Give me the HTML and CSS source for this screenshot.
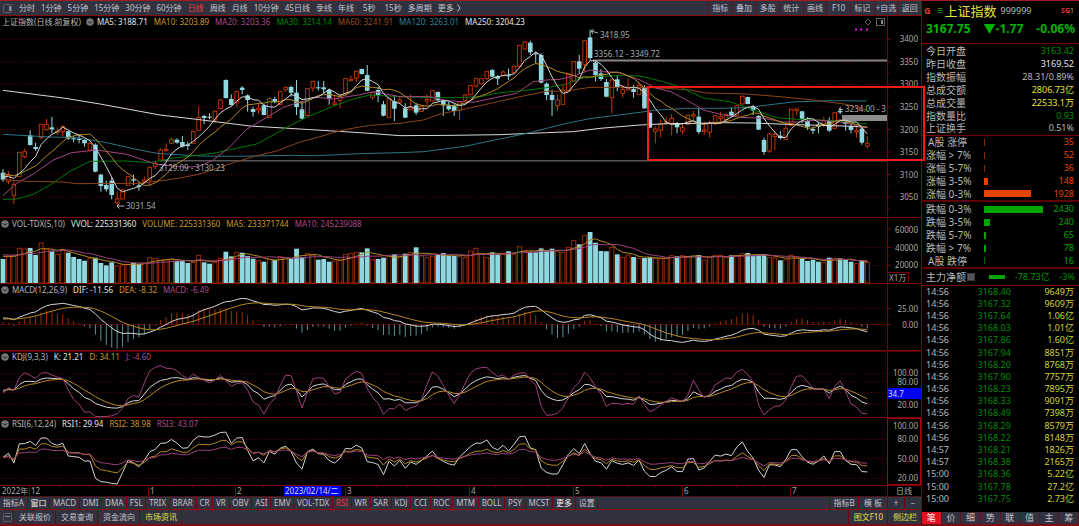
FILE: index.html
```html
<!DOCTYPE html>
<html lang="zh-CN">
<head>
<meta charset="utf-8">
<title>上证指数 999999</title>
<link rel="stylesheet" href="styles.css">
</head>
<body>
<div class="app">
  <main class="main">
    <nav class="bar bar-top">
      <div class="periods">
        <button class="icon-btn" aria-label="侧栏"><svg viewBox="0 0 9 9"><rect x=".5" y=".5" width="8" height="8" rx="1" fill="none" stroke="#5c5c66"/><path d="M6 2v5h2V2z" fill="#8a8a94"/></svg></button>
        <button>分时</button><button>1分钟</button><button>5分钟</button><button>15分钟</button><button>30分钟</button><button>60分钟</button><button class="active">日线</button><button>周线</button><button>月线</button><button>10分钟</button><button>45日线</button><button>季线</button><button>年线</button><button class="wide">5秒</button><button>15秒</button><button>多周期</button><button class="more">更多<svg class="chev" viewBox="0 0 4 8"><path d="M.5.5 3 4 .5 7.500" fill="none" stroke="#c4c4cc"/></svg></button>
      </div>
      <div class="tools">
        <button>指标</button><button>叠加</button><button>多股</button><button>统计</button><button>画线</button><button>F10</button><button>标记</button><button>+自选</button><button>返回</button>
      </div>
    </nav>

    <section class="panel">
      <svg id="price" class="plot" viewBox="0 16 921 202"></svg>
      <div class="legend"><span>上证指数(日线.前复权)</span><svg class="fold" viewBox="0 0 9 9"><circle cx="4.500" cy="4.500" r="4.200" fill="#77777b"/><path d="M2.300 3.700 4.500 6 6.700 3.700" fill="none" stroke="#111"/></svg><span class="white">MA5: 3188.71</span><span class="gold">MA10: 3203.89</span><span class="pink">MA20: 3203.36</span><span class="green">MA30: 3214.14</span><span class="brown">MA60: 3241.91</span><span class="teal">MA120: 3263.01</span><span class="white">MA250: 3204.23</span></div>
    </section>
    <section class="panel">
      <svg id="volume" class="plot" viewBox="0 218 921 66"></svg>
      <div class="legend"><svg class="fold" viewBox="0 0 9 9"><circle cx="4.500" cy="4.500" r="4.200" fill="#77777b"/><path d="M2.300 3.700 4.500 6 6.700 3.700" fill="none" stroke="#111"/></svg><span>VOL-TDX(5,10)</span><span class="white">VVOL: 225331360</span><span class="gold">VOLUME: 225331360</span><span class="gold">MA5: 233371744</span><span class="pink">MA10: 245239088</span></div>
    </section>
    <section class="panel">
      <svg id="macd" class="plot" viewBox="0 284 921 67"></svg>
      <div class="legend"><svg class="fold" viewBox="0 0 9 9"><circle cx="4.500" cy="4.500" r="4.200" fill="#77777b"/><path d="M2.300 3.700 4.500 6 6.700 3.700" fill="none" stroke="#111"/></svg><span>MACD(12,26,9)</span><span class="white">DIF: -11.56</span><span class="gold">DEA: -8.32</span><span class="pink">MACD: -6.49</span></div>
    </section>
    <section class="panel">
      <svg id="kdj" class="plot" viewBox="0 351 921 67"></svg>
      <div class="legend"><svg class="fold" viewBox="0 0 9 9"><circle cx="4.500" cy="4.500" r="4.200" fill="#77777b"/><path d="M2.300 3.700 4.500 6 6.700 3.700" fill="none" stroke="#111"/></svg><span>KDJ(9,3,3)</span><span class="white">K: 21.21</span><span class="gold">D: 34.11</span><span class="pink">J: -4.60</span></div>
    </section>
    <section class="panel">
      <svg id="rsi" class="plot" viewBox="0 418 921 68"></svg>
      <div class="legend"><svg class="fold" viewBox="0 0 9 9"><circle cx="4.500" cy="4.500" r="4.200" fill="#77777b"/><path d="M2.300 3.700 4.500 6 6.700 3.700" fill="none" stroke="#111"/></svg><span>RSI(6,12,24)</span><span class="white">RSI1: 29.94</span><span class="gold">RSI2: 38.98</span><span class="pink">RSI3: 43.07</span></div>
    </section>
    <svg id="dates" class="plot" viewBox="0 486 921 10"></svg>

    <nav class="bar bar-tabs">
      <div class="cells tabs">
        <button>指标A</button><button class="lit">窗口</button><button>MACD</button><button>DMI</button><button>DMA</button><button>FSL</button><button>TRIX</button><button>BRAR</button><button>CR</button><button>VR</button><button>OBV</button><button>ASI</button><button>EMV</button><button>VOL-TDX</button><button class="active">RSI</button><button>WR</button><button>SAR</button><button>KDJ</button><button>CCI</button><button>ROC</button><button>MTM</button><button>BOLL</button><button>PSY</button><button>MCST</button><button class="lit">更多</button><button>设置</button>
      </div>
      <div class="cells cells-right">
        <button class="mode">指标B</button><button class="mode">模 板</button><button class="sign">+</button><button class="sign">−</button>
      </div>
    </nav>
    <footer class="bar bar-status">
      <div class="cells">
        <button class="icon-btn" aria-label="面板"><svg viewBox="0 0 9 9"><rect x=".5" y=".5" width="8" height="8" rx="1" fill="none" stroke="#5c5c66"/><path d="M2 3.500h5" stroke="#8a8a92"/></svg></button>
        <button>关联报价</button><button>交易查询</button><button>资金流向</button><button class="yellow">市场资讯</button>
      </div>
      <div class="cells cells-right"><button class="yellow">图文F10</button><button class="yellow">侧边栏</button></div>
    </footer>
    <div class="mark-box"></div>
  </main>

  <aside class="side">
    <header class="quote">
      <div class="quote-name"><b class="red">G</b><span class="menu">☰</span><h1>上证指数</h1><span class="code">999999</span><span class="sg"><b class="red">SG</b>1</span></div>
      <div class="quote-price"><span>3167.75</span><span>▼-1.77</span><span>-0.06%</span></div>
    </header>
    <table class="facts">
      <tr><th>今日开盘</th><td class="down">3163.42</td></tr>
      <tr><th>昨日收盘</th><td class="bright">3169.52</td></tr>
      <tr><th>指数振幅</th><td>28.31/0.89%</td></tr>
      <tr><th>总成交额</th><td class="sum">2806.73亿</td></tr>
      <tr><th>总成交量</th><td class="sum">22533.1万</td></tr>
      <tr><th>指数量比</th><td class="down">0.93</td></tr>
      <tr><th>上证换手</th><td>0.51%</td></tr>
    </table>
    <table class="facts spread up">
      <tr><th class="in">A股 涨停</th><td><i class="thin" style="width:1px"></i></td><td>35</td></tr>
      <tr><th>涨幅 &gt; 7%</th><td><i class="thin" style="width:1px"></i></td><td>52</td></tr>
      <tr><th>涨幅 5-7%</th><td><i class="thin" style="width:1px"></i></td><td>36</td></tr>
      <tr><th>涨幅 3-5%</th><td><i style="width:4px"></i></td><td>148</td></tr>
      <tr><th>涨幅 0-3%</th><td><i style="width:47px"></i></td><td>1928</td></tr>
    </table>
    <table class="facts spread fall">
      <tr><th>跌幅 0-3%</th><td><i style="width:59px"></i></td><td>2430</td></tr>
      <tr><th>跌幅 3-5%</th><td><i style="width:6px"></i></td><td>240</td></tr>
      <tr><th>跌幅 5-7%</th><td><i style="width:2px"></i></td><td>65</td></tr>
      <tr><th>跌幅 &gt; 7%</th><td><i style="width:2px"></i></td><td>78</td></tr>
      <tr><th class="in">A股 跌停</th><td><i class="thin" style="width:1px"></i></td><td>16</td></tr>
    </table>
    <div class="flow"><span>主力净额</span><svg class="flow-icon" viewBox="0 0 8 8"><rect width="8" height="8" fill="#3a3a3e"/><path d="M1 2h6M1 4h6M1 6h6" stroke="#8a8a8e" stroke-width=".7"/></svg><i style="width:16px"></i><span class="amount">-78.73亿</span><span class="pct">-3%</span></div>
    <div class="deals">
      <table>
        <tr><td>14:56</td><td>3168.40</td><td>9649万</td></tr>
        <tr><td>14:56</td><td>3167.32</td><td>9609万</td></tr>
        <tr><td>14:56</td><td>3167.64</td><td>1.06亿</td></tr>
        <tr><td>14:56</td><td>3168.03</td><td>1.01亿</td></tr>
        <tr><td>14:56</td><td>3167.86</td><td>1.60亿</td></tr>
        <tr><td>14:56</td><td>3167.94</td><td>8851万</td></tr>
        <tr><td>14:56</td><td>3168.20</td><td>8768万</td></tr>
        <tr><td>14:56</td><td>3167.90</td><td>7757万</td></tr>
        <tr><td>14:56</td><td>3168.23</td><td>7895万</td></tr>
        <tr><td>14:56</td><td>3168.33</td><td>9091万</td></tr>
        <tr><td>14:56</td><td>3168.49</td><td>7398万</td></tr>
        <tr><td>14:56</td><td>3168.29</td><td>8579万</td></tr>
        <tr><td>14:56</td><td>3168.22</td><td>8148万</td></tr>
        <tr><td>14:57</td><td>3168.21</td><td>1826万</td></tr>
        <tr><td>14:57</td><td>3168.38</td><td>2165万</td></tr>
        <tr><td>15:00</td><td>3168.36</td><td>5.22亿</td></tr>
        <tr><td>15:00</td><td>3167.78</td><td>27.2亿</td></tr>
        <tr><td>15:00</td><td>3167.75</td><td>2.73亿</td></tr>
      </table>
    </div>
    <nav class="side-tabs"><button class="on">笔</button><button>价</button><button>细</button><button>势</button><button>联</button><button>值</button><button>主</button><button>筹</button></nav>
  </aside>
</div>
<script src="charts.js"></script>
</body>
</html>
```
FILE: styles.css
```css
:root {
  --line: #780008;
  --bar: #31313f;
  --text: #b8b8b8;
  --gold: #c8982a;
  --pink: #ad4a88;
  --green: #008400;
  --brown: #96501e;
  --teal: #2f8494;
  --yellow: #e2e23c;
}
* { box-sizing: border-box; }
body {
  margin: 0;
  background: #000;
  color: var(--text);
  font: 8px/10px "Noto Sans", "Noto Sans CJK SC", sans-serif;
}
button {
  padding: 0;
  border: 0;
  background: none;
  color: #c4c4cc;
  font: inherit;
  white-space: nowrap;
}
button.active { color: #f03c3c; }
button.lit { color: #f0f0f0; }
button.yellow { color: var(--yellow); }
.app {
  display: grid;
  grid-template-columns: minmax(0, 1fr) 157px;
  min-height: 100vh;
  border-top: 1px solid #9c1c24;
}
.main {
  position: relative;
  display: flex;
  flex-direction: column;
  border-right: 1px solid var(--line);
}
.bar {
  display: flex;
  justify-content: space-between;
  background: var(--bar);
  border-bottom: 1px solid #860a12;
}
.bar-top { height: 15px; }
.periods {
  display: flex;
  align-items: center;
  gap: 6px;
  padding-left: 3px;
}
.icon-btn svg { display: block; width: 9px; height: 9px; }
.periods .icon-btn { margin-right: 1px; }
.periods .wide { padding: 0 3px; }
.more { display: flex; align-items: center; gap: 3px; }
.chev { width: 4px; height: 8px; }
.tools {
  display: grid;
  grid-template-columns: repeat(9, 1fr);
  width: 213px;
}
.tools button { border-left: 1px solid #5c1420; }

.panel { display: grid; }
.plot { display: block; width: 100%; height: auto; }
.panel > * { grid-area: 1 / 1; }
.legend {
  display: flex;
  align-items: center;
  align-self: start;
  gap: 6px;
  height: 12px;
  padding-left: 2px;
  white-space: nowrap;
}
.legend .fold { margin: 0 -3px 0 -1px; }
.legend .fold:first-child { margin-left: 0; }
.panel:not(:first-of-type) .legend { padding-left: 1px; }
.fold { width: 8px; height: 8px; }
.white { color: #e4e4e4; }
.gold { color: var(--gold); }
.pink { color: var(--pink); }
.green { color: var(--green); }
.brown { color: var(--brown); }
.teal { color: var(--teal); }
.plot text { font-size: 8px; fill: #a8a8a8; }

.cells { display: flex; }
.cells button { padding: 0 2px; border-right: 1px solid var(--line); }
.cells-right button { border-right: 0; border-left: 1px solid var(--line); }
.tabs { width: 65%; }
.tabs button { flex: 1 0 auto; }
.bar-tabs { height: 14px; border-top: 1px solid #4c1018; }
.bar-tabs .sign { width: 17px; }
.bar-tabs .mode { width: 29px; }
.bar-status { height: 16px; border-bottom: 2px solid #7c0c14; }
.bar-status .cells button { padding: 0 4px 0 5px; }
.bar-status .cells .icon-btn { padding: 0 1px 0 3px; }
.mark-box {
  position: absolute;
  top: 85px;
  right: -4px;
  width: 278px;
  height: 75px;
  border: 2px solid #ee1c14;
}

.side {
  display: flex;
  flex-direction: column;
  font-size: 9px;
}
.quote { height: 43px; border-bottom: 1px solid var(--line); }
.quote-name {
  display: flex;
  align-items: center;
  height: 19px;
  padding: 0 5px 0 2px;
}
.red { color: #e43838; }
.menu { margin: 0 2px 0 6px; color: #2c9c2c; font-size: 7px; }
h1 {
  margin: 0;
  color: var(--yellow);
  font-size: 13px;
  font-weight: 400;
  line-height: 18px;
}
.code { margin-left: 4px; }
.sg { margin-left: auto; font-size: 7px; }
.quote-price {
  display: flex;
  justify-content: space-between;
  padding: 1px 4px 0 4px;
  color: #00b400;
  font-size: 12px;
  font-weight: 700;
  line-height: 16px;
}
table { width: 100%; border-collapse: collapse; }
td, th { padding: 0; font-weight: 400; }
.facts { border-bottom: 1px solid var(--line); }
.facts tr { height: 13px; }
.facts th {
  padding-left: 4px;
  font-size: 10px;
  text-align: left;
  white-space: nowrap;
}
.facts th.in { padding-left: 6px; }
.facts td { padding-right: 5px; text-align: right; }
.down { color: #009000; }
.bright { color: #e4e4e4; }
.sum { color: var(--yellow); }
.spread th { width: 62px; }
.spread td:nth-child(2) { padding: 0; }
.spread i { display: block; height: 7px; background: currentColor; }
.spread .thin { opacity: .6; }
.up { border-bottom: 2px solid #5c0006; color: #e44400; }
.fall { margin-top: 1px; border-bottom: 2px solid #5c0006; color: #00a400; }
.up th, .fall th { color: var(--text); }
.flow {
  display: flex;
  align-items: center;
  height: 17px;
  padding: 0 4px;
  border-bottom: 1px solid var(--line);
  font-size: 10px;
}
.flow-icon { width: 8px; height: 8px; margin-left: 1px; }
.flow i { height: 4px; margin-left: 14px; background: #00a400; }
.amount, .pct { margin-left: auto; color: #009000; font-size: 9px; }
.deals { flex: 1; padding-bottom: 7px; }
.deals table { height: 100%; }
.deals td:nth-child(1) { padding-left: 4px; }
.deals td:nth-child(2) { color: #008c00; text-align: center; }
.deals td:nth-child(3) { padding-right: 5px; color: #d2d23c; text-align: right; }
.side-tabs {
  display: grid;
  grid-template-columns: repeat(8, 1fr);
  height: 14px;
  border-bottom: 2px solid #7c0c14;
  background: var(--bar);
}
.side-tabs button { border-right: 1px solid #5c1420; }
.side-tabs .on { background: #e01420; color: #fff; }
```
FILE: charts.js
```js
// Daily candles: kind, high, body top, body bottom, low. Three units make one pixel.
const candles = `d 507 518 539 545;u 513 526 544 553;u 545 554 586 612;u 456 457 530 530;u 446 455 470 476;d 391 405 435 437;d 428 441 447 453;u 372 373 413 418;u 357 373 389 392;d 351 382 388 400;u 382 393 397 405;u 375 380 395 410;d 392 394 416 419;d 408 415 418 427;d 406 416 420 430;d 418 420 430 440;u 425 430 450 453;d 430 434 515 517;d 521 524 558 575;d 542 555 568 575;d 533 542 585 598;u 575 597 608 617;u 566 570 597 597;u 528 530 556 556;d 524 538 542 555;d 546 556 560 572;u 530 540 545 552;u 500 502 540 558;u 482 490 500 508;u 445 450 480 480;u 430 448 452 455;u 413 419 430 432;d 415 419 428 431;d 408 426 440 443;d 425 434 438 450;u 392 394 430 430;u 319 352 391 391;d 345 348 354 372;d 340 350 353 358;u 332 334 360 368;u 298 300 326 327;d 238 240 294 296;d 283 297 315 317;u 272 274 306 320;d 258 263 270 283;d 283 286 300 335;d 320 327 336 350;u 310 325 330 342;d 312 316 345 346;u 292 296 353 354;d 290 297 306 310;u 272 275 313 316;u 260 262 269 276;d 257 261 278 290;d 240 278 321 345;d 305 328 356 358;u 264 266 347 350;u 242 244 264 275;d 243 262 265 272;d 243 262 268 280;d 266 269 297 314;u 283 309 314 318;u 282 290 301 325;u 235 236 281 285;u 227 238 242 245;u 212 214 234 246;d 206 207 222 224;d 195 225 272 273;u 276 277 292 299;d 260 270 285 307;d 303 313 347 349;u 294 295 352 353;d 288 304 326 363;u 290 300 307 312;d 310 325 353 354;u 283 322 330 330;d 309 316 338 345;u 315 319 334 336;u 283 298 303 315;u 271 272 303 305;d 274 276 301 303;d 299 303 316 348;d 305 316 328 332;d 310 317 333 348;u 304 306 331 360;u 282 285 301 303;u 256 257 284 286;u 234 236 258 263;u 234 236 251 253;u 213 214 235 240;d 207 210 230 232;d 225 229 236 255;u 211 216 226 230;d 206 226 228 240;u 198 199 218 220;u 134 136 200 203;u 123 126 147 150;d 122 128 157 165;d 155 160 163 190;d 160 165 248 250;d 247 251 285 300;d 270 285 300 348;u 283 300 317 333;u 255 270 313 314;u 222 224 274 276;u 183 185 243 245;d 165 184 206 222;u 120 122 193 215;d 89 112 174 182;d 185 188 225 244;d 207 220 237 243;d 237 246 290 292;u 237 240 293 340;d 228 238 261 273;u 255 269 280 293;u 235 262 270 272;d 255 267 276 293;u 248 256 284 285;d 256 261 325 326;d 335 339 383 384;u 380 387 395 430;u 358 373 390 413;u 350 366 370 375;u 342 355 372 406;d 366 370 382 400;u 368 383 393 402;u 344 346 373 375;u 332 344 348 362;d 325 350 396 402;u 365 390 394 405;u 362 370 397 413;u 345 347 372 375;u 335 350 356 370;u 340 343 359 368;d 323 335 347 350;u 315 317 346 348;u 286 289 312 313;d 290 291 312 313;d 315 319 332 345;d 345 348 389 390;d 413 420 456 464;u 398 402 453 458;u 392 404 410 450;d 393 407 414 418;u 370 385 418 418;u 326 328 376 377;u 325 327 332 346;d 333 334 356 370;d 352 363 381 390;d 380 387 392 402;d 365 374 380 400;u 350 362 375 382;d 352 360 392 396;u 336 338 385 386;d 322 333 337 342;d 362 366 372 392;d 373 378 390 400;u 378 392 396 413;d 383 386 428 434;u 408 430 438 445`
  .split(";").map(s => { const [k, ...v] = s.split(" "); return { up: k === "u", h: +v[0], t: +v[1], b: +v[2], l: +v[3] }; });

const volumeTops = [132,123,122,100,102,99,120,84,102,107,118,104,113,126,132,137,130,128,144,151,142,153,150,148,144,146,144,128,130,135,134,133,138,138,144,142,121,142,146,142,130,110,124,112,113,123,131,137,140,133,135,124,128,131,101,126,116,120,134,132,140,138,135,118,115,112,112,100,134,132,128,123,118,126,116,113,97,123,127,124,118,114,123,123,125,128,108,100,118,128,112,118,114,109,118,95,107,110,110,100,108,101,110,112,97,76,88,61,51,83,108,109,98,118,127,120,126,130,129,127,130,131,130,122,124,122,125,123,120,135,127,121,121,126,121,122,116,114,122,120,120,127,129,136,134,121,127,130,138,134,140,143,128,130,130,135,140,146,137,142];

// Long moving averages as x,y knots in the same units.
const longAverages = [
  ["#d8d8d8", "9,271 190,294 300,312 480,345 590,358 750,378 900,387 1080,398 1200,407 1350,406 1500,404 1640,398 1720,395 1800,385 1860,380 1920,375 2000,371 2100,370 2160,368 2260,369 2360,373 2460,376 2560,379 2602,382"],
  ["#2a7484", "9,403 150,411 230,413 320,428 400,446 470,460 600,468 700,469 870,466 950,467 1080,461 1200,458 1270,455 1350,445 1400,438 1460,425 1520,413 1580,400 1640,385 1700,370 1770,356 1840,347 1920,337 1960,331 2060,325 2160,325 2240,323 2320,313 2380,306 2480,302 2600,303"],
  ["#8a4418", "9,539 80,544 190,546 230,551 420,550 500,540 550,532 600,522 650,505 700,488 760,470 830,453 900,426 960,410 1000,398 1050,386 1110,376 1200,370 1270,360 1320,342 1400,326 1480,308 1560,290 1640,274 1700,273 1770,262 1920,262 2000,265 2070,270 2120,279 2240,282 2340,290 2440,300 2540,313 2602,331"],
  ["#007800", "9,598 50,597 100,583 150,555 210,514 270,484 380,483 450,488 520,474 600,465 650,458 700,447 770,432 820,405 870,377 920,352 1000,318 1060,297 1110,285 1200,290 1300,293 1370,293 1440,290 1500,278 1560,273 1640,263 1700,252 1740,235 1800,229 1870,226 1920,228 1990,245 2040,261 2110,294 2190,305 2260,330 2330,353 2390,358 2510,362 2602,372"],
  ["#a04680", "9,587 50,550 100,522 160,480 215,458 290,450 380,463 470,493 560,502 600,498 640,480 690,440 740,388 800,352 850,322 900,306 950,292 1000,297 1080,284 1120,275 1200,290 1290,290 1340,302 1420,307 1500,290 1550,280 1600,245 1640,240 1680,238 1730,225 1770,210 1810,215 1860,218 1920,240 1970,265 2010,274 2060,300 2110,330 2170,345 2220,352 2290,355 2350,366 2390,366 2450,360 2520,366 2602,383"]
];

const WHITE = "#d4d4d4", GOLD = "#b48820", PINK = "#9c4078", RED = "#780008";
const AXIS = 887, RIGHT = 918;
const x = i => 3 + i * 5.436;
const el = (tag, a) => `<${tag} ${Object.entries(a).map(([k, v]) => `${k}="${v}"`).join(" ")}/>`;
const seg = (x1, y1, x2, y2, stroke, w = 1) => el("line", { x1, y1, x2, y2, stroke, "stroke-width": w });
const box = (bx, by, width, height, fill) => el("rect", { x: bx, y: by, width, height, fill });
const dots = y => el("line", { x1: 0, x2: AXIS, y1: y, y2: y, stroke: "#580008", "stroke-dasharray": "1 2" });
const word = (tx, cy, s, extra = "") => `<text x="${tx}" y="${cy + 3}" ${extra}>${s}</text>`;
const label = (cy, s) => word(RIGHT, cy, s, 'text-anchor="end"');
const curve = (ys, stroke) => el("polyline", { points: ys.map((y, i) => `${x(i).toFixed(1)},${y.toFixed(1)}`).join(" "), fill: "none", stroke });
const average = (v, n, before) => v.map((_, i) => { let s = 0; for (let k = i - n + 1; k <= i; k++) s += k < 0 ? before : v[k]; return s / n; });
const frame = (top, bottom) => seg(AXIS + .5, top, AXIS + .5, bottom, RED) + seg(0, bottom - .5, 921, bottom - .5, RED);
const tick = (y, w = 4) => seg(AXIS, y, AXIS + w, y, RED);
const draw = (id, s) => { document.getElementById(id).innerHTML = s; };

const close = candles.map(c => c.up ? c.t : c.b);

function drawPrice() {
  let s = frame(16, 218);
  for (let k = 0; k < 8; k++) {
    const y = 39.3 + k * 22.55;
    s += dots(y) + tick(y) + tick(y + 11.3, 2) + label(y, 3400 - 50 * k);
  }
  s += seg(160, 160.7, AXIS, 160.7, "#55555a", 1.5) + seg(593, 60.5, AXIS, 60.5, "#858585", 2) + box(842, 115, 45, 6, "#8c8c8c");
  candles.forEach((c, i) => {
    const cx = x(i), col = c.up ? "#c83800" : "#90d8e0";
    if (c.up) {
      s += seg(cx, c.h / 3, cx, c.t / 3, col) + seg(cx, c.b / 3, cx, c.l / 3, col);
      s += el("rect", { x: cx - 1.8, y: c.t / 3, width: 3.6, height: Math.max(.8, (c.b - c.t) / 3), fill: "#000", stroke: col, "stroke-width": .9 });
    } else {
      s += seg(cx, c.h / 3, cx, c.l / 3, col) + box(cx - 2.3, c.t / 3, 4.6, Math.max(1, (c.b - c.t) / 3), col);
    }
  });
  for (const [stroke, knots] of longAverages)
    s += el("polyline", { points: knots.split(" ").map(p => p.split(",").map(v => v / 3).join(",")).join(" "), fill: "none", stroke });
  s += curve(average(close, 10, 522).map(v => v / 3), GOLD) + curve(average(close, 5, 528).map(v => v / 3), WHITE);
  s += word(600, 35, "3418.95") + word(594, 54, "3356.12 - 3349.72") + word(159, 168, "3129.09 - 3130.23") + word(126, 206, "3031.54") + word(845, 109, "3234.00 - 3");
  const arrow = d => el("path", { d, fill: "none", stroke: "#b0b0b0" });
  s += arrow("M598 33 591 31M594 29.500 591 31 593 34") + arrow("M124.500 206H117M119.500 203.500 117 206l2.500 2.500") + arrow("M843 109.500H839M840.500 108 839 109.500 840.500 111");
  for (const dx of [856, 861, 867]) s += box(dx - 1, 28.5, 2, 2, "#e810e8");
  s += el("path", { d: "M868 19l3 3-3 3-3-3z", fill: "none", stroke: "#606064" });
  s += el("rect", { x: 876.5, y: 18.5, width: 8, height: 7, fill: "none", stroke: "#606064" }) + box(881, 20, 2, 4, "#88888a");
  draw("price", s);
}

function drawVolume() {
  let s = frame(218, 284) + dots(247.5) + dots(265.5) + tick(229) + tick(238, 2) + tick(247.5) + tick(256, 2) + tick(265.5);
  s += label(229.5, 60000) + label(247.5, 40000) + label(265, 20000);
  volumeTops.forEach((v, i) => {
    const y = 215 + v / 3, h = 283 - y;
    s += candles[i].up
      ? el("rect", { x: x(i) - 2, y, width: 4, height: h, fill: "#000", stroke: "#a43000", "stroke-width": .9 })
      : box(x(i) - 2.4, y, 4.8, h, "#90d8e0");
  });
  s += curve(average(volumeTops, 5, 122).map(v => 215 + v / 3), GOLD) + curve(average(volumeTops, 10, 118).map(v => 215 + v / 3), PINK);
  s += el("rect", { x: 887.5, y: 272.5, width: 21, height: 11, fill: "#000", stroke: RED }) + word(889, 278, "X1万");
  draw("volume", s);
}

function drawMacd() {
  let s = frame(284, 351) + dots(308.5) + seg(0, 324.5, AXIS, 324.5, "#580008") + tick(308.5) + tick(324.5) + tick(316.5, 2);
  s += label(308.5, "25.00") + label(324.5, "0.00");
  let fast = -528, slow = -544, dea = 8;
  const dif = [], sig = [];
  close.forEach((c, i) => {
    fast += (-c - fast) * 2 / 13;
    slow += (-c - slow) * 2 / 27;
    const d = (fast - slow) * .739;
    dea += (d - dea) * .2;
    dif.push(324.5 - d * .64);
    sig.push(324.5 - dea * .64);
    const bar = (d - dea) * 2 * .64;
    s += seg(x(i), 324.5, x(i), 324.5 - bar, bar > 0 ? "#a03000" : "#5c9098");
  });
  draw("macd", s + curve(dif, WHITE) + curve(sig, GOLD));
}

function drawKdj() {
  let s = frame(351, 418) + seg(0, 351.5, 921, 351.5, "#500006") + dots(373.5) + dots(381.5) + dots(392.5) + dots(404.5);
  s += label(372.5, "100.00") + label(381.5, "80.00") + label(404.5, "20.00");
  s += box(888, 388, 33, 11, "#0000f0") + word(888, 393.5, "34.7", 'style="fill:#dcdcdc"');
  let k = 52, d = 58;
  const K = [], D = [], J = [];
  const y = v => Math.max(364, Math.min(416.5, 373.3 + (100 - v) * .388));
  candles.forEach((c, i) => {
    const span = candles.slice(Math.max(0, i - 8), i + 1);
    let hi = Math.min(...span.map(p => p.h)), lo = Math.max(...span.map(p => p.l));
    if (i < 8) { hi = Math.min(hi, 500); lo = Math.max(lo, 590); }
    k += ((lo - close[i]) / (lo - hi) * 100 - k) / 3;
    d += (k - d) / 3;
    K.push(y(k)); D.push(y(d)); J.push(y(3 * k - 2 * d));
  });
  draw("kdj", s + curve(K, WHITE) + curve(D, GOLD) + curve(J, PINK));
}

function drawRsi() {
  let s = seg(0, 485.5, 921, 485.5, RED) + dots(439.5) + dots(458.5) + dots(478.5);
  s += el("rect", { x: 887.5, y: 418.5, width: 33, height: 66, fill: "none", stroke: "#a80008" });
  s += label(426, "100.00") + label(439, "80.00") + label(458.5, "50.00") + label(478, "20.00");
  for (const [n, stroke] of [[6, WHITE], [12, GOLD], [24, PINK]]) {
    let gain = 10, move = 19.5, prev = 540;
    s += curve(close.map(c => {
      const up = prev - c;
      prev = c;
      gain += (Math.max(up, 0) - gain) / n;
      move += (Math.abs(up) - move) / n;
      return 458.6 + (50 - gain / move * 100) * .65;
    }), stroke);
  }
  draw("rsi", s);
}

function drawDates() {
  let s = seg(AXIS + .5, 486, AXIS + .5, 496, RED) + word(2, 491, "2022年") + word(31, 491, "12") + word(896, 491, "日线");
  for (const [tx, m] of [[148.5, 1], [235.5, 2], [345.5, 3], [469.5, 4], [573.5, 5], [682.5, 6], [790.5, 7]])
    s += seg(tx, 486, tx, 496, RED) + word(tx + 1.5, 491, m);
  s += seg(29.5, 486, 29.5, 496, RED);
  for (const tx of [59, 89, 119, 170, 192, 214, 263, 376, 407, 438, 495, 521, 547, 600, 628, 655, 709, 736, 763])
    s += seg(tx + .5, 486, tx + .5, 487, RED);
  s += box(284, 486, 57, 10, "#0000f0") + word(285, 491, "2023/02/14/二", 'style="fill:#dcdcdc"');
  draw("dates", s);
}

drawPrice();
drawVolume();
drawMacd();
drawKdj();
drawRsi();
drawDates();
```
